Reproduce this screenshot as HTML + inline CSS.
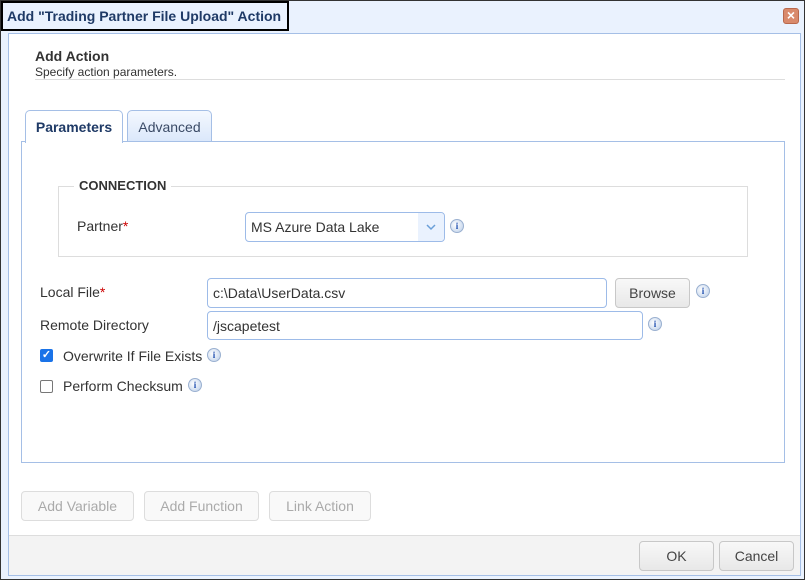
<!DOCTYPE html>
<html><head><style>
*{box-sizing:border-box;margin:0;padding:0}
body{width:805px;height:580px;position:relative;font-family:"Liberation Sans",Arial,sans-serif;font-size:14px;color:#333;background:#fff;overflow:hidden}
.a{position:absolute}
.outer{left:0;top:0;width:805px;height:580px;border:1px solid #333;background:#eaf2fe}
.title{left:1px;top:1px;width:288px;height:30px;border:2px solid #000;background:#eaf2fe;font-weight:bold;color:#1f3a66;font-size:14px;padding:5px 0 0 4px}
.close{left:783px;top:8px;width:16px;height:16px;background:#d98a6c;border:1px solid #b9684c;border-radius:3px;color:#fff;font-weight:bold;font-size:14px;line-height:13px;text-align:center}
.panel{left:8px;top:33px;width:793px;height:543px;background:#fff;border:1px solid #a5bfe6}
.footer{left:9px;top:535px;width:791px;height:40px;background:#f3f3f3;border-top:1px solid #ddd}
.tab{height:33px;border:1px solid #a5bfe6;border-bottom:none;border-radius:5px 5px 0 0;padding:8px 0 0 0;text-align:center}
.tp{left:21px;top:141px;width:764px;height:322px;border:1px solid #a5bfe6}
.inp{border:1px solid #9dbbe8;border-radius:4px;padding:6px 5px;font-size:14px;color:#333;background:#fff}
.btn{border:1px solid #c8c8c8;border-radius:4px;background:linear-gradient(#f8f8f8,#e8e8e8);text-align:center;padding-top:6px;color:#444}
.dis{border:1px solid #ddd;border-radius:4px;background:#f9f9f9;color:#aaa;text-align:center;padding-top:6px}
.i{width:14px;height:14px;border-radius:50%;background:radial-gradient(circle at 40% 40%,#fff,#b9cde8);border:1px solid #9ab0d0;color:#2050b0;font:bold 9px "Liberation Serif",serif;text-align:center;line-height:12px}
.req{color:#c00}
</style></head><body>
<div class="a outer"></div>
<div class="a title">Add "Trading Partner File Upload" Action</div>
<div class="a close">×</div>
<div class="a panel"></div>
<div class="a footer"></div>
<div class="a" style="left:35px;top:48px;font-weight:bold;font-size:14px">Add Action</div>
<div class="a" style="left:35px;top:65px;font-size:12px">Specify action parameters.</div>
<div class="a" style="left:35px;top:79px;width:750px;height:1px;background:#ddd"></div>
<div class="a tp"></div>
<div class="a tab" style="left:25px;top:110px;width:98px;background:#fff;font-weight:bold;color:#1f3a66;height:33px">Parameters</div>
<div class="a tab" style="left:127px;top:110px;width:85px;height:31px;background:linear-gradient(#f4f8fe,#dbe8fb);color:#3a4a66">Advanced</div>
<div class="a" style="left:58px;top:186px;width:690px;height:71px;border:1px solid #ddd"></div>
<div class="a" style="left:74px;top:178px;background:#fff;padding:0 5px;font-weight:bold;font-size:13px">CONNECTION</div>
<div class="a" style="left:77px;top:218px">Partner<span class="req">*</span></div>
<div class="a inp" style="left:245px;top:212px;width:200px;height:30px">MS Azure Data Lake</div>
<div class="a" style="left:418px;top:213px;width:26px;height:28px;background:#eaf2fe;border-radius:0 4px 4px 0"><svg width="26" height="28"><path d="M9 12 L13 16 L17 12" fill="none" stroke="#6a9fd8" stroke-width="1.5"/></svg></div>
<div class="a i" style="left:450px;top:219px">i</div>
<div class="a" style="left:40px;top:284px">Local File<span class="req">*</span></div>
<div class="a inp" style="left:207px;top:278px;width:400px;height:30px">c:\Data\UserData.csv</div>
<div class="a btn" style="left:615px;top:278px;width:75px;height:30px">Browse</div>
<div class="a i" style="left:696px;top:284px">i</div>
<div class="a" style="left:40px;top:317px">Remote Directory</div>
<div class="a inp" style="left:207px;top:311px;width:436px;height:29px">/jscapetest</div>
<div class="a i" style="left:648px;top:317px">i</div>
<div class="a" style="left:40px;top:349px;width:13px;height:13px;background:#1a73e8;border-radius:2px;color:#fff;font-size:11px;line-height:13px;text-align:center;font-weight:bold">✓</div>
<div class="a" style="left:63px;top:348px">Overwrite If File Exists</div>
<div class="a i" style="left:207px;top:348px">i</div>
<div class="a" style="left:40px;top:380px;width:13px;height:13px;border:1px solid #777;border-radius:2px"></div>
<div class="a" style="left:63px;top:378px">Perform Checksum</div>
<div class="a i" style="left:188px;top:378px">i</div>
<div class="a dis" style="left:21px;top:491px;width:113px;height:30px">Add Variable</div>
<div class="a dis" style="left:144px;top:491px;width:115px;height:30px">Add Function</div>
<div class="a dis" style="left:269px;top:491px;width:102px;height:30px">Link Action</div>
<div class="a btn" style="left:639px;top:541px;width:75px;height:30px">OK</div>
<div class="a btn" style="left:719px;top:541px;width:75px;height:30px">Cancel</div>
</body></html>
